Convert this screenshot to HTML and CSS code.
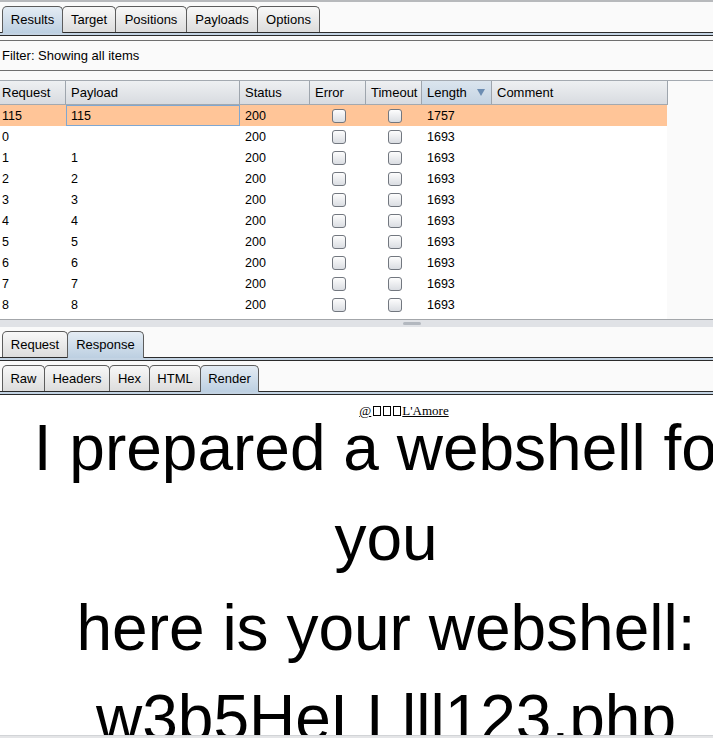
FILE: index.html
```html
<!DOCTYPE html>
<html>
<head>
<meta charset="utf-8">
<link rel="stylesheet" href="styles.css">
</head>
<body>
<div class="app">
  <div class="topline"></div>
  <div class="tabbar top">
    <div class="tab sel t-results">Results</div>
    <div class="tab t-target">Target</div>
    <div class="tab t-positions">Positions</div>
    <div class="tab t-payloads">Payloads</div>
    <div class="tab t-options">Options</div>
  </div>
  <div class="strip"></div>
  <div class="filter">Filter: Showing all items</div>
  <div class="grid">
    <div class="thead">
      <div class="th c1">Request</div>
      <div class="th c2">Payload</div>
      <div class="th c3">Status</div>
      <div class="th c4">Error</div>
      <div class="th c5">Timeout</div>
      <div class="th c6 sorted"><span>Length</span><span class="arrow"></span></div>
      <div class="th c7">Comment</div>
    </div>
    <div class="row sel">
      <div class="td c1">115</div><div class="td c2 focus">115</div><div class="td c3">200</div>
      <div class="td c4 chk"><span class="cb"></span></div><div class="td c5 chk"><span class="cb"></span></div>
      <div class="td c6">1757</div><div class="td c7"></div>
    </div>
    <div class="row">
      <div class="td c1">0</div><div class="td c2"></div><div class="td c3">200</div>
      <div class="td c4 chk"><span class="cb"></span></div><div class="td c5 chk"><span class="cb"></span></div>
      <div class="td c6">1693</div><div class="td c7"></div>
    </div>
    <div class="row">
      <div class="td c1">1</div><div class="td c2">1</div><div class="td c3">200</div>
      <div class="td c4 chk"><span class="cb"></span></div><div class="td c5 chk"><span class="cb"></span></div>
      <div class="td c6">1693</div><div class="td c7"></div>
    </div>
    <div class="row">
      <div class="td c1">2</div><div class="td c2">2</div><div class="td c3">200</div>
      <div class="td c4 chk"><span class="cb"></span></div><div class="td c5 chk"><span class="cb"></span></div>
      <div class="td c6">1693</div><div class="td c7"></div>
    </div>
    <div class="row">
      <div class="td c1">3</div><div class="td c2">3</div><div class="td c3">200</div>
      <div class="td c4 chk"><span class="cb"></span></div><div class="td c5 chk"><span class="cb"></span></div>
      <div class="td c6">1693</div><div class="td c7"></div>
    </div>
    <div class="row">
      <div class="td c1">4</div><div class="td c2">4</div><div class="td c3">200</div>
      <div class="td c4 chk"><span class="cb"></span></div><div class="td c5 chk"><span class="cb"></span></div>
      <div class="td c6">1693</div><div class="td c7"></div>
    </div>
    <div class="row">
      <div class="td c1">5</div><div class="td c2">5</div><div class="td c3">200</div>
      <div class="td c4 chk"><span class="cb"></span></div><div class="td c5 chk"><span class="cb"></span></div>
      <div class="td c6">1693</div><div class="td c7"></div>
    </div>
    <div class="row">
      <div class="td c1">6</div><div class="td c2">6</div><div class="td c3">200</div>
      <div class="td c4 chk"><span class="cb"></span></div><div class="td c5 chk"><span class="cb"></span></div>
      <div class="td c6">1693</div><div class="td c7"></div>
    </div>
    <div class="row">
      <div class="td c1">7</div><div class="td c2">7</div><div class="td c3">200</div>
      <div class="td c4 chk"><span class="cb"></span></div><div class="td c5 chk"><span class="cb"></span></div>
      <div class="td c6">1693</div><div class="td c7"></div>
    </div>
    <div class="row">
      <div class="td c1">8</div><div class="td c2">8</div><div class="td c3">200</div>
      <div class="td c4 chk"><span class="cb"></span></div><div class="td c5 chk"><span class="cb"></span></div>
      <div class="td c6">1693</div><div class="td c7"></div>
    </div>
    <div class="row tail"></div>
  </div>
  <div class="splitter"><span class="grip"></span></div>
  <div class="tabbar sub">
    <div class="tab t-request">Request</div>
    <div class="tab sel t-response">Response</div>
  </div>
  <div class="strip"></div>
  <div class="tabbar sub">
    <div class="tab t-raw">Raw</div>
    <div class="tab t-headers">Headers</div>
    <div class="tab t-hex">Hex</div>
    <div class="tab t-html">HTML</div>
    <div class="tab sel t-render">Render</div>
  </div>
  <div class="strip"></div>
  <div class="render">
    <div class="render-inner">
      <div class="author"><a class="author-link">@<span class="tofu"></span><span class="tofu"></span><span class="tofu"></span>L'Amore</a></div>
      <div class="big">I prepared a webshell for you<br>here is your webshell:<br>w3b5HeLLlll123.php</div>
    </div>
  </div>
  <div class="bottombar"></div>
</div>
</body>
</html>
```

FILE: styles.css
```css
* { box-sizing: border-box; }
html, body { margin: 0; padding: 0; }
body {
  background: #fafafa;
  font-family: "Liberation Sans", Arial, sans-serif;
  color: #000;
  width: 713px;
  height: 738px;
  overflow: hidden;
}
.app { display: flex; flex-direction: column; height: 738px; }

.topline { height: 2px; background: #b7b9bc; flex: none; }

.tabbar { display: flex; align-items: flex-end; padding-left: 2px; height: 26px; flex: none; }
.tabbar.top { margin-top: 4px; }
.tabbar.sub { margin-top: 4px; }
.tab {
  height: 26px;
  border: 1px solid #5c5c5c;
  border-bottom: none;
  border-radius: 5px 5px 0 0;
  margin-left: -1px;
  background: linear-gradient(#f8f8f8, #dcdcdc);
  font-size: 13px;
  line-height: 25px;
  text-align: center;
  flex: none;
}
.tab:first-child { margin-left: 0; }
.tab.sel {
  background: linear-gradient(#e4ecf4, #bccfe1);
  height: 27px;
  margin-bottom: -1px;
  position: relative;
  z-index: 1;
}
.t-results { width: 61px; }
.t-target { width: 54px; }
.t-positions { width: 72px; }
.t-payloads { width: 72px; }
.t-options { width: 63px; }
.t-request { width: 66px; }
.t-response { width: 77px; }
.t-raw { width: 43px; }
.t-headers { width: 66px; }
.t-hex { width: 41px; }
.t-html { width: 52px; }
.t-render { width: 59px; }

.strip {
  height: 4px;
  flex: none;
  border-top: 1px solid #2b2b2b;
  border-bottom: 1px solid #2b2b2b;
  background: #c3d3e3;
}

.filter {
  margin-top: 4px;
  height: 31px;
  flex: none;
  border-top: 1px solid #6f6f6f;
  border-bottom: 1px solid #6f6f6f;
  font-size: 13px;
  line-height: 29px;
  padding-left: 2px;
}

.grid {
  margin-top: 9px;
  height: 240px;
  flex: none;
  overflow: hidden;
  border-top: 1px solid #a4aab1;
  border-bottom: 1px solid #a3a6aa;
}
.thead {
  display: flex;
  width: 668px;
  height: 24px;
  border-bottom: 1px solid #a3a9b0;
  background: linear-gradient(#eef0f2, #d8dbe0);
}
.th {
  height: 23px;
  font-size: 13px;
  line-height: 23px;
  padding-left: 5px;
  border-right: 1px solid #9ea5ad;
  white-space: nowrap;
  overflow: hidden;
}
.th.c1 { padding-left: 2px; }
.th.sorted {
  display: flex;
  justify-content: space-between;
  align-items: center;
  padding-right: 6px;
  background: linear-gradient(#dbe5ee, #c4d3e2);
}
.arrow {
  width: 0; height: 0;
  border-left: 4px solid transparent;
  border-right: 4px solid transparent;
  border-top: 7px solid #6c8db2;
}
.c1 { width: 66px; }
.c2 { width: 174px; }
.c3 { width: 70px; }
.c4 { width: 56px; }
.c5 { width: 56px; }
.c6 { width: 70px; }
.c7 { width: 176px; }

.row {
  display: flex;
  width: 667px;
  height: 21px;
  background: #fff;
}
.row.tail { height: 4px; }
.row.sel { background: #ffc598; }
.td {
  height: 21px;
  font-size: 12.5px;
  line-height: 23px;
  padding-left: 5px;
  white-space: nowrap;
  overflow: hidden;
}
.td.c1 { padding-left: 2px; }
.td.c7 { width: 175px; }
.td.focus { box-shadow: inset 0 0 0 1px #7fa7d1; }
.td.chk {
  display: flex;
  align-items: center;
  justify-content: center;
  padding-left: 2px;
  padding-top: 1px;
}
.cb {
  width: 14px;
  height: 14px;
  border: 1px solid #72777f;
  border-radius: 3px;
  background: linear-gradient(#fdfdfd, #dadde2);
}

.splitter {
  height: 7px;
  flex: none;
  background: #e0e2e6;
  padding-left: 403px;
  padding-top: 2px;
}
.grip {
  display: block;
  width: 18px;
  height: 3px;
  border-radius: 2px;
  background: #b3b8bf;
}

.render {
  height: 340px;
  flex: none;
  background: #fff;
  overflow: hidden;
}
.render-inner {
  width: 772px;
  text-align: center;
}
.author {
  padding-top: 9px;
  padding-left: 36px;
  height: 23px;
  font-family: "Liberation Serif", "DejaVu Serif", serif;
  font-size: 13px;
  line-height: 14px;
}
.author-link { text-decoration: underline; color: #000; }
.tofu {
  display: inline-block;
  width: 8px;
  height: 10px;
  border: 1px solid #000;
  margin-left: 2px;
  vertical-align: -1px;
}
.tofu:last-child { margin-right: 1px; }
.big {
  margin-top: -15px;
  font-family: "Liberation Sans", Arial, sans-serif;
  font-size: 64px;
  line-height: 90px;
}

.bottombar {
  height: 4px;
  flex: none;
  background: #e4e5e7;
  border-top: 1px solid #d2d4d7;
}
```
